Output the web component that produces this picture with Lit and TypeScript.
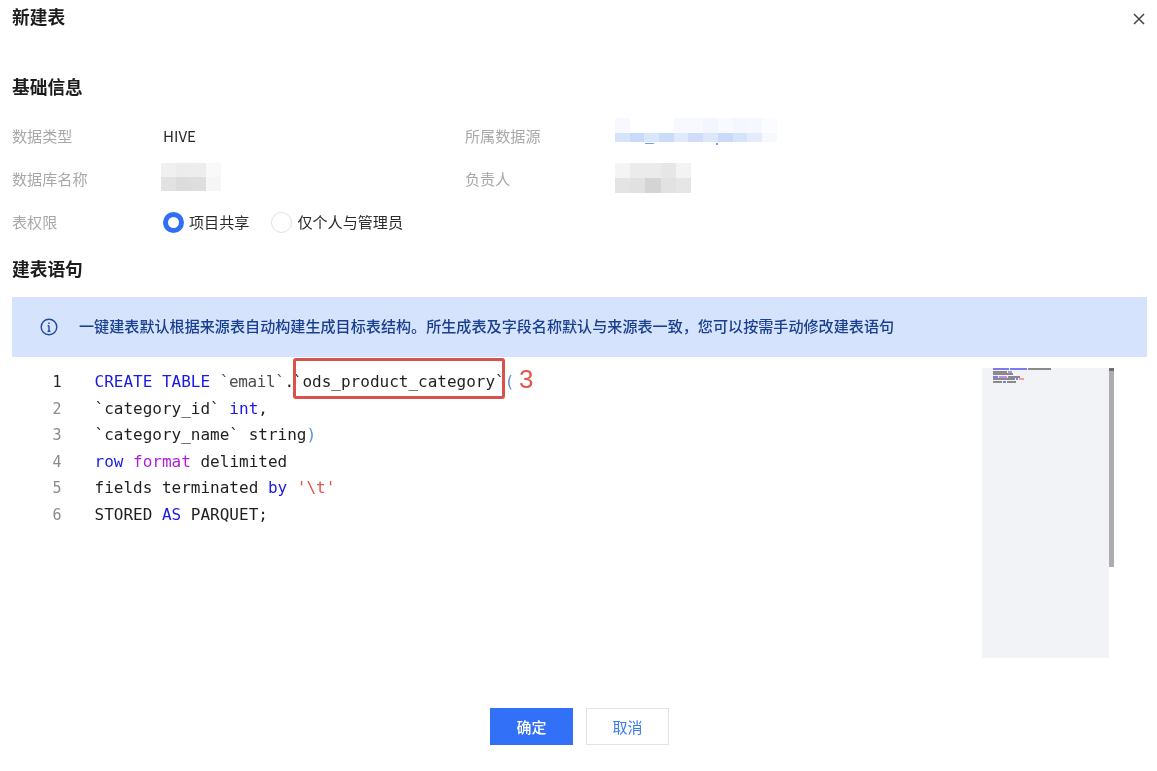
import { LitElement, html, css } from "lit";
import { customElement } from "lit/decorators.js";
import { styleMap } from "lit/directives/style-map.js";

const DB_BLUR = [
  ["#f0f0f0", "#ececec", "#ededed", "#f9f9f9"],
  ["#e2e2e2", "#dcdcdc", "#dedede", "#f6f6f6"],
];
const SOURCE_BLUR = [
  ["#f7f9ff", "#ffffff", "#ffffff", "#ffffff", "#f7f9ff", "#f7f9ff", "#f3f6fe", "#f8faff", "#f4f7fe", "#f5f8fe", "#fbfcff"],
  ["#d6e3fb", "#c9dafa", "#dbe6fc", "#cbdbfa", "#e0eafc", "#cfddfa", "#dce7fc", "#c8d9fa", "#d7e3fb", "#e4ecfc", "#f6f8fe"],
];
const OWNER_BLUR = [
  ["#f4f4f4", "#ebebeb", "#ebebeb", "#e6e6e6", "#f3f3f3"],
  ["#e4e4e4", "#e1e1e1", "#d4d4d4", "#e2e2e2", "#e6e6e6"],
];

@customElement("app-root")
export class AppRoot extends LitElement {
  static styles = css`
    :host {
      display: block;
      width: 1157px;
      height: 771px;
      background: #fff;
      color: #222;
      font-family: "Noto Sans CJK SC", "Liberation Sans", sans-serif;
      font-size: 15.1px;
      overflow: hidden;
    }
    .dialog {
      display: flex;
      flex-direction: column;
      height: 771px;
      box-sizing: border-box;
      padding: 4px 10px 26px 12px;
      filter: blur(0.45px);
    }
    .head {
      display: flex;
      justify-content: space-between;
      align-items: center;
      height: 24px;
    }
    .title {
      font-size: 17.7px;
      font-weight: 700;
      line-height: 24px;
      color: #1c1c1c;
    }
    .close {
      width: 12px;
      height: 12px;
      margin: 6px 2px 0 0;
      display: block;
    }
    .section {
      font-size: 17.7px;
      font-weight: 700;
      line-height: 24px;
      color: #1c1c1c;
    }
    .s1 { margin-top: 46px; }
    .s2 { margin-top: 14px; }
    .info {
      display: grid;
      grid-template-columns: 151px 302px 150px 1fr;
      grid-auto-rows: 43px;
      margin-top: 15px;
      align-items: center;
    }
    .label { color: #a8a8a8; line-height: 22px; }
    .value { line-height: 22px; color: #2a2a2a; }
    .blur {
      display: grid;
      width: max-content;
    }
    .blur i { display: block; }
    .db { margin: -2px 0 0 -2px; }
    .src-wrap { position: relative; width: max-content; margin-top: -10px; }
    .dash { position: absolute; left: 30px; top: 25px; width: 9px; height: 1px; background: #6ea0f5; }
    .dot { position: absolute; left: 101px; top: 25px; width: 2px; height: 2px; background: #6ea0f5; }
    .radios { display: flex; align-items: center; gap: 22px; }
    .radio { display: flex; align-items: center; gap: 5px; line-height: 22px; color: #2a2a2a; }
    .dot-r {
      box-sizing: border-box;
      width: 21px;
      height: 21px;
      margin-top: 4px;
      border-radius: 50%;
      border: 1px solid #dcdfe8;
      background: #fff;
    }
    .dot-r.on { border: 5px solid #2f6ff6; }
    .alert {
      display: flex;
      align-items: center;
      gap: 21px;
      height: 60px;
      margin-top: 17px;
      padding-left: 28px;
      background: #d5e4fc;
      color: #1a3f8f;
      font-weight: 500;
      line-height: 22px;
    }
    .alert svg { width: 18px; height: 18px; flex: none; }
    .alert span { margin-bottom: 4px; }
    .editor {
      position: relative;
      flex: 1;
      display: flex;
      min-height: 0;
    }
    .code {
      padding-top: 12px;
      font-family: "DejaVu Sans Mono", "Liberation Mono", monospace;
      font-size: 16px;
      line-height: 26.6px;
      color: #1f1f1f;
    }
    .line { display: flex; white-space: pre; }
    .num { width: 49.5px; text-align: right; padding-right: 33px; color: #8a8a8a; font-size: 15px; }
    .line.active .num { color: #222; }
    .kw { color: #1a1ae6; }
    .fn { color: #b01fd8; }
    .str { color: #e2524a; }
    .sub { color: #4d4d4d; letter-spacing: -0.4px; }
    .brace { color: #5b8fdc; }
    .dotc { letter-spacing: -1.2px; }
    .mark {
      position: absolute;
      left: 281px;
      top: 1px;
      width: 212px;
      height: 41px;
      box-sizing: border-box;
      border: 3px solid #d9534a;
      border-radius: 3px;
    }
    .three {
      position: absolute;
      left: 507px;
      top: 6px;
      color: #e2574c;
      font-family: "Liberation Sans", sans-serif;
      font-size: 26px;
      line-height: 32px;
    }
    .mini {
      position: absolute;
      left: 970px;
      top: 11px;
      width: 132px;
      height: 290px;
      display: flex;
    }
    .mini-body {
      flex: 1;
      background: #f2f3f6;
      padding: 0 0 0 11px;
      display: flex;
      flex-direction: column;
    }
    .mini-row { display: flex; height: 2.5px; gap: 1px; }
    .mini-row b { display: block; height: 2px; }
    .mini-bar { width: 5px; height: 199px; background: #adadad; border-top: 3px solid #6f6f6f; box-sizing: border-box; }
    .foot {
      display: flex;
      justify-content: center;
      gap: 13px;
    }
    button {
      width: 83px;
      height: 37px;
      box-sizing: border-box;
      font: inherit;
      font-size: 15px;
      padding: 0;
      border-radius: 0;
      cursor: pointer;
    }
    .ok { background: #3270f8; border: 0; color: #fff; font-weight: 500; }
    .cancel { background: #fff; border: 1px solid #dfe3ea; color: #3b7bf0; }
  `;

  private blur(rows: string[][], cellW: number, rowHeights: number[], extra = "") {
    return html`<div
      class="blur ${extra}"
      style=${styleMap({
        gridTemplateColumns: `repeat(${rows[0].length}, ${cellW}px)`,
        gridTemplateRows: rowHeights.map((h) => `${h}px`).join(" "),
      })}
    >
      ${rows.flat().map((c) => html`<i style=${styleMap({ background: c })}></i>`)}
    </div>`;
  }

  private miniRow(segs: [number, string][]) {
    return html`<div class="mini-row">
      ${segs.map(([w, c]) => html`<b style=${styleMap({ width: `${w}px`, background: c })}></b>`)}
    </div>`;
  }

  render() {
    return html`
      <div class="dialog">
        <div class="head">
          <div class="title">新建表</div>
          <svg class="close" viewBox="0 0 12 12" fill="none" stroke="#444" stroke-width="1.5">
            <path d="M1 1l10 10M11 1L1 11" />
          </svg>
        </div>
        <div class="section s1">基础信息</div>
        <div class="info">
          <div class="label">数据类型</div>
          <div class="value">HIVE</div>
          <div class="label">所属数据源</div>
          <div class="src-wrap">
            ${this.blur(SOURCE_BLUR, 14.7, [15, 9])}
            <span class="dash"></span><span class="dot"></span>
          </div>

          <div class="label">数据库名称</div>
          <div>${this.blur(DB_BLUR, 15, [14, 14], "db")}</div>
          <div class="label">负责人</div>
          <div>${this.blur(OWNER_BLUR, 15.2, [15, 15])}</div>

          <div class="label">表权限</div>
          <div class="radios">
            <label class="radio"><span class="dot-r on"></span>项目共享</label>
            <label class="radio"><span class="dot-r"></span>仅个人与管理员</label>
          </div>
        </div>
        <div class="section s2">建表语句</div>
        <div class="alert">
          <svg viewBox="0 0 18 18" fill="none" stroke="#1f4a9c" stroke-width="1.4">
            <circle cx="9" cy="9" r="7.8" />
            <path d="M9 7.8v5.4M7.6 7.8H9M7.6 13.2h2.8" />
            <path d="M9 4.4v1.6" />
          </svg>
          <span>一键建表默认根据来源表自动构建生成目标表结构。所生成表及字段名称默认与来源表一致，您可以按需手动修改建表语句</span>
        </div>
        <div class="editor">
          <div class="code">
            <div class="line active"><span class="num">1</span><span><span class="kw">CREATE TABLE</span> <span class="sub">\`email\`</span><span class="dotc">.</span>\`ods_product_category\`<span class="brace">(</span></span></div>
            <div class="line"><span class="num">2</span><span>\`category_id\` <span class="kw">int</span>,</span></div>
            <div class="line"><span class="num">3</span><span>\`category_name\` string<span class="brace">)</span></span></div>
            <div class="line"><span class="num">4</span><span><span class="kw">row</span> <span class="fn">format</span> delimited</span></div>
            <div class="line"><span class="num">5</span><span>fields terminated <span class="kw">by</span> <span class="str">'\\t'</span></span></div>
            <div class="line"><span class="num">6</span><span>STORED <span class="kw">AS</span> PARQUET;</span></div>
          </div>
          <div class="mark"></div>
          <div class="three">3</div>
          <div class="mini">
            <div class="mini-body">
              ${this.miniRow([[16, "#7c7cf0"], [17, "#7c7cf0"], [23, "#8a8a8a"]])}
              ${this.miniRow([[14, "#8a8a8a"], [4, "#9a9af0"]])}
              ${this.miniRow([[20, "#8a8a8a"]])}
              ${this.miniRow([[5, "#7c7cf0"], [8, "#c888e8"], [12, "#8a8a8a"]])}
              ${this.miniRow([[22, "#8a8a8a"], [2, "#7c7cf0"], [5, "#f0a0a0"]])}
              ${this.miniRow([[9, "#8a8a8a"], [3, "#7c7cf0"], [9, "#8a8a8a"]])}
            </div>
            <div class="mini-bar"></div>
          </div>
        </div>
        <div class="foot">
          <button class="ok">确定</button>
          <button class="cancel">取消</button>
        </div>
      </div>
    `;
  }
}
